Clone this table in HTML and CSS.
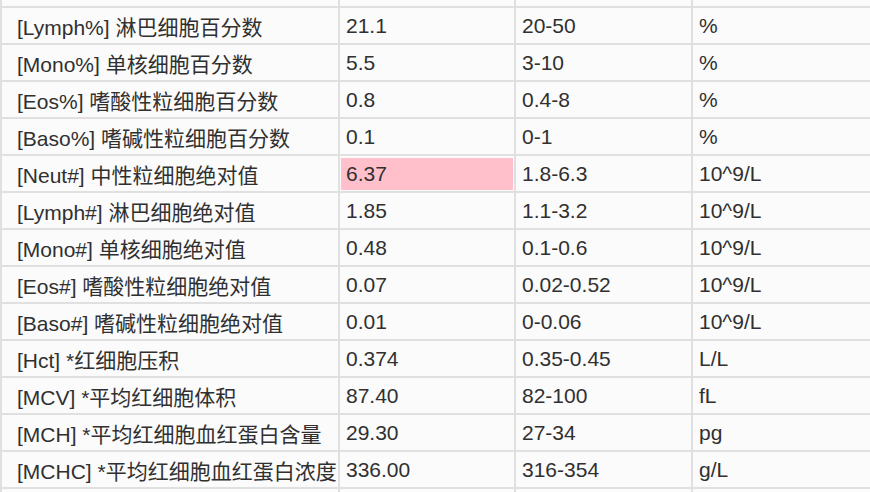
FILE: index.html
```html
<!DOCTYPE html>
<html lang="zh-CN">
<head>
<meta charset="utf-8">
<link rel="stylesheet" href="styles.css">
</head>
<body>
<table class="report">
  <colgroup>
    <col class="c-name"><col class="c-val"><col class="c-ref"><col class="c-unit">
  </colgroup>
  <tbody>
    <tr class="cut-top"><td></td><td></td><td></td><td></td></tr>
    <tr><td>[Lymph%] 淋巴细胞百分数</td><td>21.1</td><td>20-50</td><td>%</td></tr>
    <tr><td>[Mono%] 单核细胞百分数</td><td>5.5</td><td>3-10</td><td>%</td></tr>
    <tr><td>[Eos%] 嗜酸性粒细胞百分数</td><td>0.8</td><td>0.4-8</td><td>%</td></tr>
    <tr><td>[Baso%] 嗜碱性粒细胞百分数</td><td>0.1</td><td>0-1</td><td>%</td></tr>
    <tr><td>[Neut#] 中性粒细胞绝对值</td><td class="high">6.37</td><td>1.8-6.3</td><td>10^9/L</td></tr>
    <tr><td>[Lymph#] 淋巴细胞绝对值</td><td>1.85</td><td>1.1-3.2</td><td>10^9/L</td></tr>
    <tr><td>[Mono#] 单核细胞绝对值</td><td>0.48</td><td>0.1-0.6</td><td>10^9/L</td></tr>
    <tr><td>[Eos#] 嗜酸性粒细胞绝对值</td><td>0.07</td><td>0.02-0.52</td><td>10^9/L</td></tr>
    <tr><td>[Baso#] 嗜碱性粒细胞绝对值</td><td>0.01</td><td>0-0.06</td><td>10^9/L</td></tr>
    <tr><td>[Hct] *红细胞压积</td><td>0.374</td><td>0.35-0.45</td><td>L/L</td></tr>
    <tr><td>[MCV] *平均红细胞体积</td><td>87.40</td><td>82-100</td><td>fL</td></tr>
    <tr><td>[MCH] *平均红细胞血红蛋白含量</td><td>29.30</td><td>27-34</td><td>pg</td></tr>
    <tr><td>[MCHC] *平均红细胞血红蛋白浓度</td><td>336.00</td><td>316-354</td><td>g/L</td></tr>
    <tr class="cut-bottom"><td></td><td></td><td></td><td></td></tr>
  </tbody>
</table>
</body>
</html>
```
FILE: styles.css
```css
html, body {
  margin: 0;
  padding: 0;
  background: #ffffff;
  overflow: hidden;
}
.report {
  border-collapse: collapse;
  table-layout: fixed;
  width: 870px;
  background: #fbfbfb;
  font-family: "Liberation Sans", Arial, "Noto Sans CJK SC", sans-serif;
  font-size: 21px;
  color: #303030;
}
.c-name { width: 338px; }
.c-val { width: 176px; }
.c-ref { width: 177px; }
.c-unit { width: 179px; }
.report td {
  border: 2px solid #e0e0e0;
  height: 37px;
  padding: 0 6px;
  white-space: nowrap;
  overflow: hidden;
  vertical-align: middle;
  box-sizing: border-box;
}
.report td:first-child {
  padding-left: 15px;
  padding-right: 0;
}
.report .cut-top td {
  border-top: 0;
  height: 7px;
}
.report .cut-bottom td {
  border-bottom: 0;
  height: 4px;
}
.report td.high {
  background: #ffc0cb;
  box-shadow: inset 1px 2px 0 0 #fbfbfb, inset -1px -1px 0 0 #fbfbfb;
}
```
